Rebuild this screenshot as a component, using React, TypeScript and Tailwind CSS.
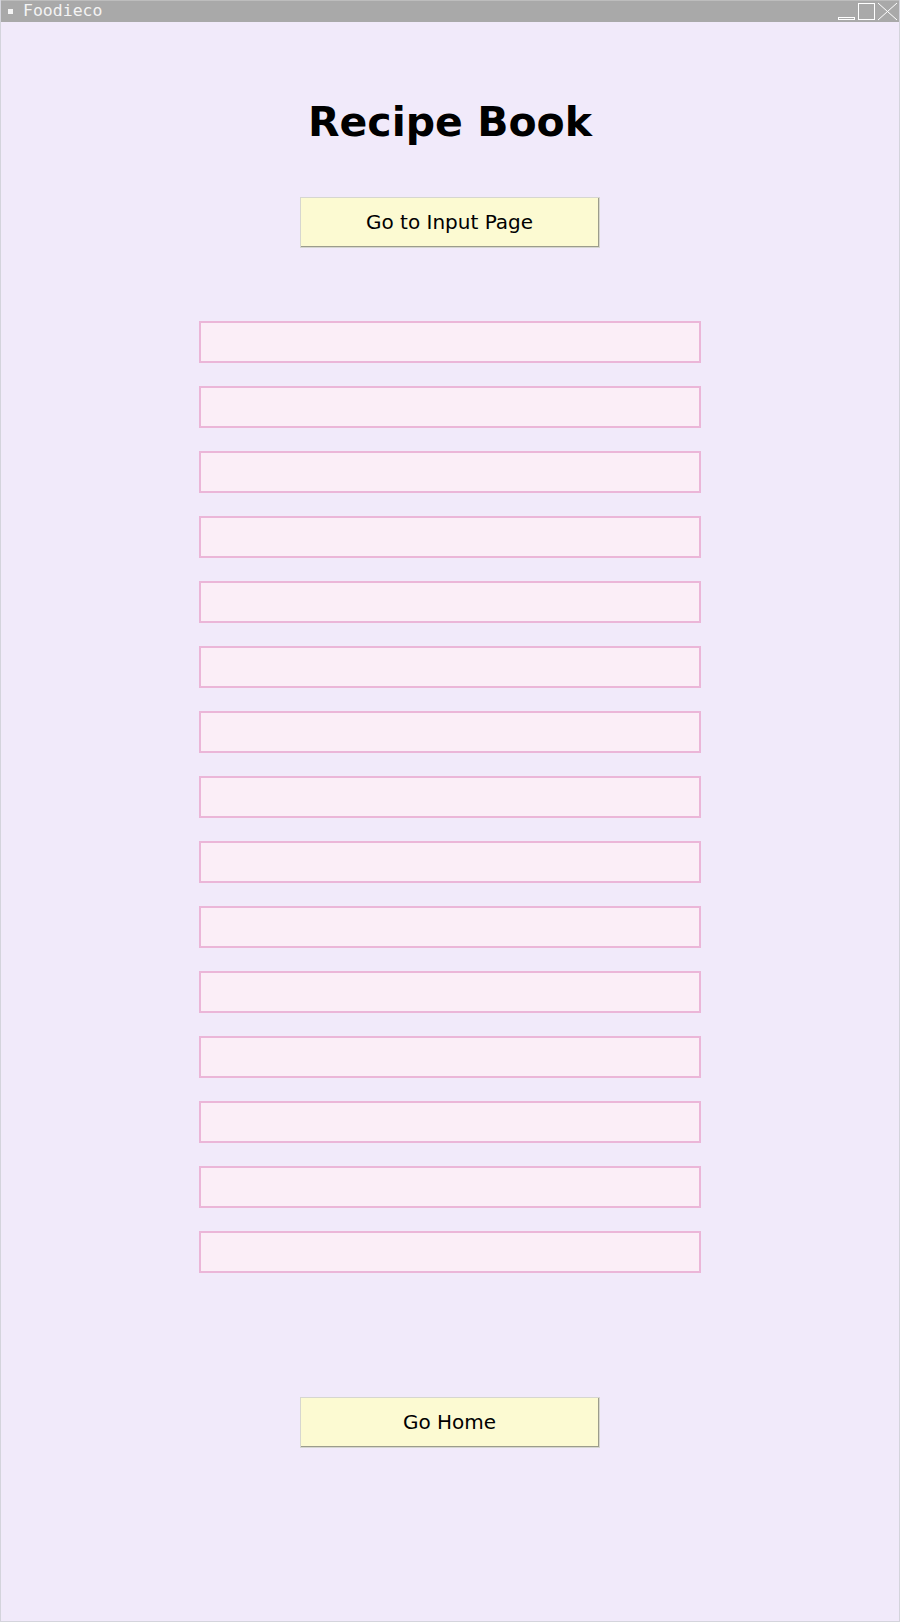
import React from "react";

function Btn({ label, className = "" }: { label: string; className?: string }) {
  return (
    <div className={"w-[300px] h-[51px] border border-[#d6d6d0] " + className}>
      <div className="w-full h-full bg-[#fcfad2] border-r border-b border-[#9c9c8c] flex items-center justify-center text-[20px] text-black font-['DejaVu_Sans',sans-serif]">
        {label}
      </div>
    </div>
  );
}

export default function App() {
  const rows = Array.from({ length: 15 }, (_, i) => i);
  return (
    <div className="w-[900px] h-[1622px] bg-[#f1eafa] flex flex-col border-x border-b border-[#d4d4dc] overflow-hidden">
      <div className="h-[22px] shrink-0 bg-[#a9a9a9] border-t border-[#bdbdbd] flex items-center relative">
        <div className="w-[5px] h-[5px] bg-[#f4f4f4] ml-[7px]" />
        <span className="ml-[10px] text-[16.5px] leading-none text-[#f4f4f4] font-['DejaVu_Sans_Mono',monospace]">
          Foodieco
        </span>
        <svg
          className="absolute right-0 top-0"
          width="62"
          height="22"
          viewBox="0 0 62 22"
        >
          <rect x="1.5" y="16.5" width="16" height="2" fill="none" stroke="#ffffff" strokeWidth="1" />
          <rect x="21.5" y="2.5" width="16" height="16" fill="none" stroke="#ffffff" strokeWidth="1" />
          <line x1="41" y1="2" x2="60" y2="19" stroke="#ffffff" strokeWidth="1" />
          <line x1="60" y1="2" x2="41" y2="19" stroke="#ffffff" strokeWidth="1" />
        </svg>
      </div>
      <div className="flex flex-col items-center">
        <h1 className="mt-[76px] text-[41px] leading-[48px] font-bold text-black font-['DejaVu_Sans',sans-serif]">
          Recipe Book
        </h1>
        <Btn label="Go to Input Page" className="mt-[51px]" />
        <div className="mt-[73px] flex flex-col gap-[23px]">
          {rows.map((i) => (
            <div
              key={i}
              className="w-[502px] h-[42px] border-2 border-[#ebb6d8] bg-[#fbeef7]"
            />
          ))}
        </div>
        <Btn label="Go Home" className="mt-[124px]" />
      </div>
    </div>
  );
}
